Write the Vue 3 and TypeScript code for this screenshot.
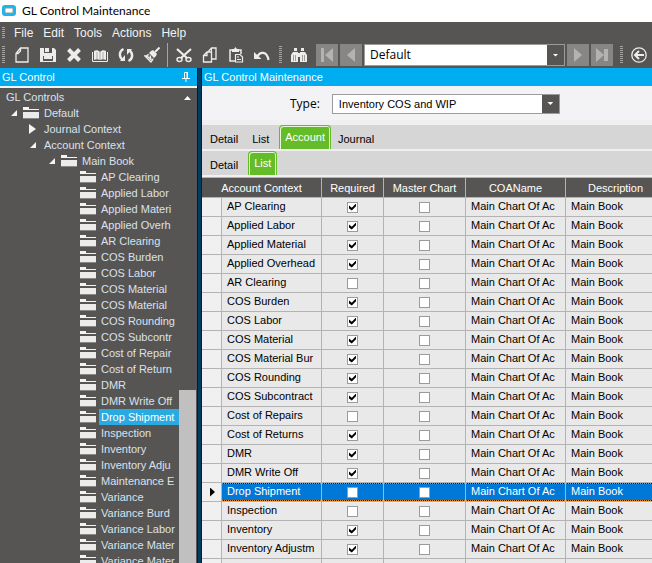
<script setup lang="ts">
import { ref } from 'vue'

interface Row {
  name: string
  required: boolean
  master: boolean
  coa: string
  description: string
}

interface Tool {
  label: string
  icon: string
}

const menus = ['File', 'Edit', 'Tools', 'Actions', 'Help']
const fileTools: Tool[] = [
  { label: 'New', icon: 'new' },
  { label: 'Save', icon: 'save' },
  { label: 'Delete', icon: 'delete' },
  { label: 'Open book', icon: 'book' },
  { label: 'Refresh', icon: 'refresh' },
  { label: 'Clear', icon: 'brush' }
]
const editTools: Tool[] = [
  { label: 'Cut', icon: 'cut' },
  { label: 'Copy', icon: 'copy' },
  { label: 'Paste', icon: 'paste' },
  { label: 'Undo', icon: 'undo' }
]

const treeItems = [
  'AP Clearing', 'Applied Labor', 'Applied Materi', 'Applied Overh', 'AR Clearing',
  'COS Burden', 'COS Labor', 'COS Material', 'COS Material', 'COS Rounding',
  'COS Subcontr', 'Cost of Repair', 'Cost of Return', 'DMR', 'DMR Write Off',
  'Drop Shipment', 'Inspection', 'Inventory', 'Inventory Adju', 'Maintenance E',
  'Variance', 'Variance Burd', 'Variance Labor', 'Variance Mater', 'Variance Mater'
]

const unrequired = ['AR Clearing', 'Cost of Repairs', 'Drop Shipment', 'Inspection']
const rows = ref<Row[]>(
  [
    'AP Clearing', 'Applied Labor', 'Applied Material', 'Applied Overhead', 'AR Clearing',
    'COS Burden', 'COS Labor', 'COS Material', 'COS Material Bur', 'COS Rounding',
    'COS Subcontract', 'Cost of Repairs', 'Cost of Returns', 'DMR', 'DMR Write Off',
    'Drop Shipment', 'Inspection', 'Inventory', 'Inventory Adjustm', 'Maintenance Exp'
  ].map((name) => ({
    name,
    required: !unrequired.includes(name),
    master: false,
    coa: 'Main Chart Of Ac',
    description: 'Main Book'
  }))
)

const selected = ref('Drop Shipment')
const company = ref('Default')
const type = ref('Inventory COS and WIP')
const mainTabs = ['Detail', 'List', 'Account', 'Journal']
const mainTab = ref('Account')
const subTabs = ['Detail', 'List']
const subTab = ref('List')
</script>

<template>
  <div class="app">
    <header class="title">
      <svg class="logo" width="14" height="12" viewBox="0 0 14 12" aria-hidden="true">
        <rect x="1.5" y="1.5" width="11" height="8" rx="1.5" fill="#fff" stroke="#1fb4ea" stroke-width="3" />
        <rect x="3" y="3" width="8" height="5" rx="1" fill="#fff" stroke="#8a9aa0" stroke-width="1" />
      </svg>
      <h1>GL Control Maintenance</h1>
    </header>

    <nav class="menu">
      <i class="grip"></i>
      <button v-for="m in menus" :key="m" type="button">{{ m }}</button>
    </nav>

    <div class="toolbar">
      <i class="grip"></i>
      <template v-for="(group, g) in [fileTools, editTools]" :key="g">
        <div class="group">
          <button v-for="t in group" :key="t.icon" class="tool" type="button" :aria-label="t.label">
            <svg width="16" height="16" viewBox="0 0 16 16" fill="none" stroke="#ececec" stroke-width="1.5">
              <path v-if="t.icon === 'new'" d="M6.5 1H14V15H2V6.5ZM6.5 1V4L4 6.5H2" stroke-width="1.3" />
              <template v-else-if="t.icon === 'save'">
                <path d="M0 1H14L16 3V15H0Z" fill="#ececec" stroke="none" />
                <path d="M4 1V6H12V1ZM3 9H13V14H3Z" fill="#575553" stroke="none" />
                <path d="M5 1H9V5H5ZM4 9H12V12H4Z" fill="#ececec" stroke="none" />
              </template>
              <path v-else-if="t.icon === 'delete'" d="M2.5 2.5L13.5 13.5M13.5 2.5L2.5 13.5" stroke-width="4" />
              <template v-else-if="t.icon === 'book'">
                <path d="M2 4C4 3 6 3 8 5C10 3 12 3 14 4V13C12 12 10 12 8 13C6 12 4 12 2 13Z" fill="#ececec" stroke="none" />
                <path d="M.5 5V14.5H15.5V5" stroke-width="1" />
                <path d="M8 5V13M5 5V12M11 5V12" stroke="#aaa" stroke-width="1" />
              </template>
              <template v-else-if="t.icon === 'refresh'">
                <path d="M5.5 2C1 4 .5 10 5 13M10.5 14C15 12 15.5 6 11 3" stroke-width="2.4" />
                <path d="M2 14H7V8ZM14 2H9V8Z" fill="#ececec" stroke="none" />
              </template>
              <template v-else-if="t.icon === 'brush'">
                <path d="M15.5 .5L11 5" stroke-width="2" />
                <path d="M7 4L9 3L13 7L12 9L10 11L5 6Z" fill="#ececec" stroke="none" />
                <path d="M4.5 7C4 9 2 9 1 9L7 15C8 14 9 13 9 11.5M3 9L8 13.5M6 8.5L7 12" stroke-width="1.3" />
              </template>
              <template v-else-if="t.icon === 'cut'">
                <path d="M1 2L11 11M15 2L5 11" stroke-width="2.2" />
                <ellipse cx="3.5" cy="12.5" rx="2.5" ry="2" />
                <ellipse cx="12.5" cy="12.5" rx="2.5" ry="2" />
              </template>
              <template v-else-if="t.icon === 'copy'">
                <path d="M6 5L9.5 1H14V12H6Z" stroke-width="1.3" />
                <path d="M5 5H9.5V15H1.5V8.5ZM5 5V8.5H1.5" fill="#575553" stroke-width="1.3" />
                <path d="M9.5 1V5" stroke-width="1" />
              </template>
              <template v-else-if="t.icon === 'paste'">
                <path d="M7 14H2V3H13V7" />
                <path d="M4 2H6L7.5 0L9 2H11V5H4Z" fill="#ececec" stroke="none" />
                <path d="M7.5 7.5H12L14.5 10V15H7.5Z" fill="#575553" stroke-width="1.2" />
                <path d="M9 10H11M9 12.5H13" stroke-width="1" />
              </template>
              <template v-else>
                <path d="M3 10C6 4 13 4 14.5 13" stroke-width="2.2" />
                <path d="M0 5V12H7.5Z" fill="#ececec" stroke="none" />
              </template>
            </svg>
          </button>
        </div>
        <i v-if="g === 0" class="rule"></i>
      </template>
      <i class="grip"></i>
      <button class="tool find" type="button" aria-label="Find">
        <svg width="16" height="16" viewBox="0 0 16 16" fill="#ececec">
          <path d="M3 1H6V4H3ZM10 1H13V4H10ZM2 5H7V15H0V8ZM9 5H14L16 8V15H9ZM7 6H9V10H7Z" />
          <path d="M2.5 8V14M4.5 8V14M11.5 8V14M13.5 8V14" stroke="#a09e9d" />
        </svg>
      </button>
      <div class="record">
        <button class="step" type="button" aria-label="First">
          <svg width="14" height="14" viewBox="0 0 14 14"><path d="M1 0H4V14H1ZM13 0V14L5 7Z" /></svg>
        </button>
        <button class="step" type="button" aria-label="Previous">
          <svg width="14" height="14" viewBox="0 0 14 14"><path d="M11 0V14L3 7Z" /></svg>
        </button>
        <span class="combo company">
          <select v-model="company" aria-label="Record"><option>Default</option></select>
          <i class="drop"></i>
        </span>
        <button class="step" type="button" aria-label="Next">
          <svg width="14" height="14" viewBox="0 0 14 14"><path d="M3 0V14L11 7Z" /></svg>
        </button>
        <button class="step" type="button" aria-label="Last">
          <svg width="14" height="14" viewBox="0 0 14 14"><path d="M1 0V14L9 7ZM9 1H13V13H9Z" /></svg>
        </button>
      </div>
      <i class="grip"></i>
      <button class="tool back" type="button" aria-label="Back">
        <svg width="16" height="16" viewBox="0 0 16 16" fill="none" stroke="#ececec">
          <circle cx="8" cy="8" r="7.2" stroke-width="1.3" />
          <path d="M4 8H13M8 4L4 8L8 12" stroke-width="2" />
        </svg>
      </button>
    </div>

    <main class="body">
      <aside class="side">
        <h2 class="bar">
          GL Control
          <svg width="8" height="10" viewBox="0 0 8 10" fill="none" stroke="#fff" aria-hidden="true">
            <path d="M2.5 6V.5H5.5V6M5 0V6M0 6.5H8M4 7V10" />
          </svg>
        </h2>
        <div class="tree">
          <div class="nodes">
            <div class="node root">GL Controls</div>
            <div class="node level1"><i class="open"></i><i class="folder"></i><span>Default</span></div>
            <div class="node level2"><i class="closed"></i><span>Journal Context</span></div>
            <div class="node level2"><i class="open"></i><span>Account Context</span></div>
            <div class="node level3"><i class="open"></i><i class="folder"></i><span>Main Book</span></div>
            <div v-for="(item, i) in treeItems" :key="i" class="node level4">
              <i class="folder"></i>
              <span :class="{ current: item === selected }">{{ item }}</span>
            </div>
          </div>
          <div class="scroll"><i class="up"></i><i class="thumb"></i></div>
        </div>
      </aside>
      <i class="splitter"></i>

      <section class="content">
        <h2 class="bar">GL Control Maintenance</h2>
        <div class="form">
          <label for="type">Type:</label>
          <span class="combo">
            <select id="type" v-model="type"><option>Inventory COS and WIP</option></select>
            <i class="drop"></i>
          </span>
        </div>
        <div class="tabs">
          <button v-for="t in mainTabs" :key="t" type="button" :class="{ active: t === mainTab }" @click="mainTab = t">{{ t }}</button>
        </div>
        <div class="tabs">
          <button v-for="t in subTabs" :key="t" type="button" :class="{ active: t === subTab }" @click="subTab = t">{{ t }}</button>
        </div>
        <div class="grid">
          <table>
            <colgroup>
              <col class="c-mark" /><col class="c-name" /><col class="c-req" /><col class="c-master" /><col class="c-coa" /><col />
            </colgroup>
            <thead>
              <tr>
                <th colspan="2">Account Context</th>
                <th>Required</th>
                <th>Master Chart</th>
                <th>COAName</th>
                <th>Description</th>
              </tr>
            </thead>
            <tbody>
              <tr v-for="r in rows" :key="r.name" :class="{ current: r.name === selected }" @click="selected = r.name">
                <td class="mark"><i v-if="r.name === selected"></i></td>
                <td>{{ r.name }}</td>
                <td class="check"><input v-model="r.required" type="checkbox" :aria-label="r.name + ' required'" /></td>
                <td class="check"><input v-model="r.master" type="checkbox" :aria-label="r.name + ' master chart'" /></td>
                <td>{{ r.coa }}</td>
                <td>{{ r.description }}</td>
              </tr>
            </tbody>
          </table>
        </div>
      </section>
    </main>
  </div>
</template>

<style>
body {
  margin: 0;
  overflow: hidden;
}
</style>

<style scoped>
* {
  box-sizing: border-box;
}
.app {
  display: flex;
  flex-direction: column;
  height: 100vh;
  overflow: hidden;
  background: #575553;
  color: #000;
  font: 11px/16px 'Liberation Sans', Arial, sans-serif;
}
button,
select {
  appearance: none;
  border: 0;
  padding: 0;
  margin: 0;
  background: none;
  color: inherit;
  font: inherit;
}
i {
  display: block;
  flex: none;
}
svg {
  display: block;
}
.title {
  display: flex;
  flex: none;
  align-items: center;
  gap: 6px;
  height: 22px;
  padding-left: 2px;
  background: #fff;
}
.title h1 {
  margin: 0;
  font: 12px/20px Lato, 'Open Sans', sans-serif;
}
.menu {
  display: flex;
  flex: none;
  align-items: center;
  gap: 10px;
  height: 22px;
  padding-left: 2px;
  color: #f2f2f2;
  font-size: 12px;
}
.grip {
  width: 3px;
  height: 18px;
  background: repeating-linear-gradient(#a5a4a3 0 1px, transparent 1px 2px);
}
.menu .grip {
  height: 12px;
  margin-right: -1px;
}
.toolbar {
  display: flex;
  flex: none;
  align-items: center;
  height: 24px;
  padding: 0 0 2px 2px;
}
.group {
  display: flex;
  padding: 0 4px 0 3px;
}
.tool {
  display: grid;
  place-items: center;
  flex: none;
  width: 26px;
  height: 22px;
}
.rule {
  width: 1px;
  height: 24px;
  background: #a5a4a3;
}
.group:first-of-type {
  padding: 0 2px 0 4px;
}
.find {
  margin: 0 4px;
}
.record {
  display: flex;
  flex: 1;
  gap: 2px;
  margin-right: 7px;
}
.step {
  display: grid;
  place-items: center;
  flex: none;
  width: 22px;
  height: 22px;
  background: #888685;
}
.step svg {
  fill: #b4b3b2;
}
.combo {
  display: flex;
  border: 1px solid #9b9b9b;
  background: #fff;
}
.combo select {
  flex: 1;
  min-width: 0;
  padding-left: 6px;
}
.company {
  flex: 1;
  height: 22px;
}
.company select {
  padding-left: 5px;
  font: 12px/18px 'Open Sans', 'Noto Sans', sans-serif;
}
.drop {
  display: grid;
  place-items: center;
  width: 17px;
  background: #575553;
  pointer-events: none;
}
.drop::after,
.up {
  width: 6px;
  height: 3px;
  background: #fff;
  clip-path: polygon(0 0, 100% 0, 50% 100%);
  content: '';
}
.back {
  margin-left: 3px;
}
.body {
  display: flex;
  flex: 1;
  min-height: 0;
}
.bar {
  display: flex;
  flex: none;
  align-items: center;
  justify-content: space-between;
  height: 18px;
  margin: 0;
  padding: 0 7px 0 2px;
  background: #00adf0;
  color: #fff;
  font-size: 11px;
  font-weight: normal;
}
.side {
  display: flex;
  flex: none;
  flex-direction: column;
  width: 197px;
}
.splitter {
  width: 5px;
  border: solid #0b1a26;
  border-width: 0 1px;
  background: #003c60;
}
.tree {
  display: flex;
  flex: 1;
  min-height: 0;
  border-top: 2px solid #f3f3f5;
}
.nodes {
  flex: 1;
  min-width: 0;
  overflow: hidden;
  padding-top: 1px;
  color: #d9e2ee;
}
.node {
  display: flex;
  align-items: center;
  height: 16px;
  white-space: nowrap;
}
.root {
  padding-left: 6px;
}
.level1 {
  padding-left: 11px;
}
.level2 {
  padding-left: 29px;
}
.level3 {
  padding-left: 49px;
}
.level4 {
  padding-left: 80px;
}
.open {
  width: 6px;
  height: 6px;
  margin-right: 6px;
  background: #f4f4f4;
  clip-path: polygon(100% 0, 100% 100%, 0 100%);
}
.level2 .open {
  margin-left: 1px;
}
.closed {
  width: 7px;
  height: 10px;
  margin-right: 6px;
  background: #f4f4f4;
  clip-path: polygon(0 0, 100% 50%, 0 100%);
}
.folder {
  width: 16px;
  height: 12px;
  margin-right: 3px;
  border-bottom: 1px solid #8b8988;
  background:
    linear-gradient(#f4f4f4 0 0) 0 0 / 6px 2px no-repeat,
    linear-gradient(#f4f4f4 0 0) 0 2px / 16px 1px no-repeat,
    linear-gradient(#ececec 0 0) 0 5px / 16px 6px no-repeat;
}
.node span {
  padding: 0 2px;
}
.node .current {
  flex: 1;
  background: #29abe2;
  color: #fff;
}
.scroll {
  display: flex;
  flex: none;
  flex-direction: column;
  align-items: center;
  justify-content: space-between;
  width: 18px;
  padding: 8px 1px 0 0;
}
.up {
  width: 7px;
  height: 4px;
  clip-path: polygon(50% 0, 100% 100%, 0 100%);
}
.thumb {
  width: 100%;
  height: 37%;
  background: #c0c0c0;
}
.content {
  display: flex;
  flex: 1;
  flex-direction: column;
  min-width: 0;
  background: #f0f0f0;
}
.form {
  display: flex;
  flex: none;
  align-items: center;
  gap: 12px;
  height: 34px;
  margin-bottom: 5px;
  padding: 1px 0 0 88px;
  background: #f3f3f5;
}
.form label {
  font: 12px/16px 'Open Sans', 'Noto Sans', sans-serif;
}
.form .combo {
  width: 228px;
  height: 20px;
}
.tabs {
  display: flex;
  flex: none;
  align-items: flex-end;
  height: 24px;
  margin-bottom: 2px;
  padding-left: 1px;
  background: #d6d6d6;
}
.tabs button {
  height: 24px;
  padding: 4px 7px 0;
}
.tabs .active {
  margin-left: 3px;
  padding: 0 5px 2px;
  border: 1px solid #65bc29;
  border-bottom: 0;
  border-radius: 4px 4px 0 0;
  background: #65bc29;
  box-shadow: inset 1px 1px #e4f5d8, inset -1px 0 #e4f5d8;
  color: #fff;
}
.grid {
  flex: 1;
  min-height: 0;
  overflow: hidden;
}
table {
  width: 100%;
  min-width: 464px;
  table-layout: fixed;
  border-collapse: separate;
  border-spacing: 0;
  border-top: 1px solid #b3b3b3;
}
.c-mark {
  width: 20px;
}
.c-name,
.c-coa {
  width: 100px;
}
.c-req {
  width: 62px;
}
.c-master {
  width: 82px;
}
th,
td {
  overflow: hidden;
  height: 19px;
  padding: 0 0 2px 5px;
  border-right: 1px solid #b3b3b3;
  border-bottom: 1px solid #b3b3b3;
  background: #e9e9e9;
  line-height: 16px;
  white-space: nowrap;
}
th {
  height: 20px;
  padding: 1px 0 0;
  background: #575553;
  color: #fff;
  font-weight: normal;
  text-align: center;
}
.mark {
  padding: 0 0 0 8px;
  background: #f0f0f0;
}
.mark i {
  width: 5px;
  height: 9px;
  background: #000;
  clip-path: polygon(0 0, 100% 50%, 0 100%);
}
.check {
  padding: 0;
}
.check input {
  appearance: none;
  display: block;
  width: 11px;
  height: 11px;
  margin: 0 auto;
  border: 1px solid #9b9b9b;
  background: #fff;
}
.check input:checked::before {
  display: block;
  width: 7px;
  height: 7px;
  margin: 1px;
  background: #000;
  clip-path: polygon(0 30%, 40% 60%, 100% 0, 100% 40%, 40% 100%, 0 70%);
  content: '';
}
tr.current td:not(.mark) {
  background:
    repeating-linear-gradient(90deg, #e8862a 0 1px, #10182a 1px 2px) 0 0 / 100% 1px no-repeat,
    repeating-linear-gradient(90deg, #e8862a 0 1px, #10182a 1px 2px) 0 100% / 100% 1px no-repeat,
    #0078d7;
  background-clip: padding-box;
  background-origin: padding-box;
  color: #fff;
}
</style>
